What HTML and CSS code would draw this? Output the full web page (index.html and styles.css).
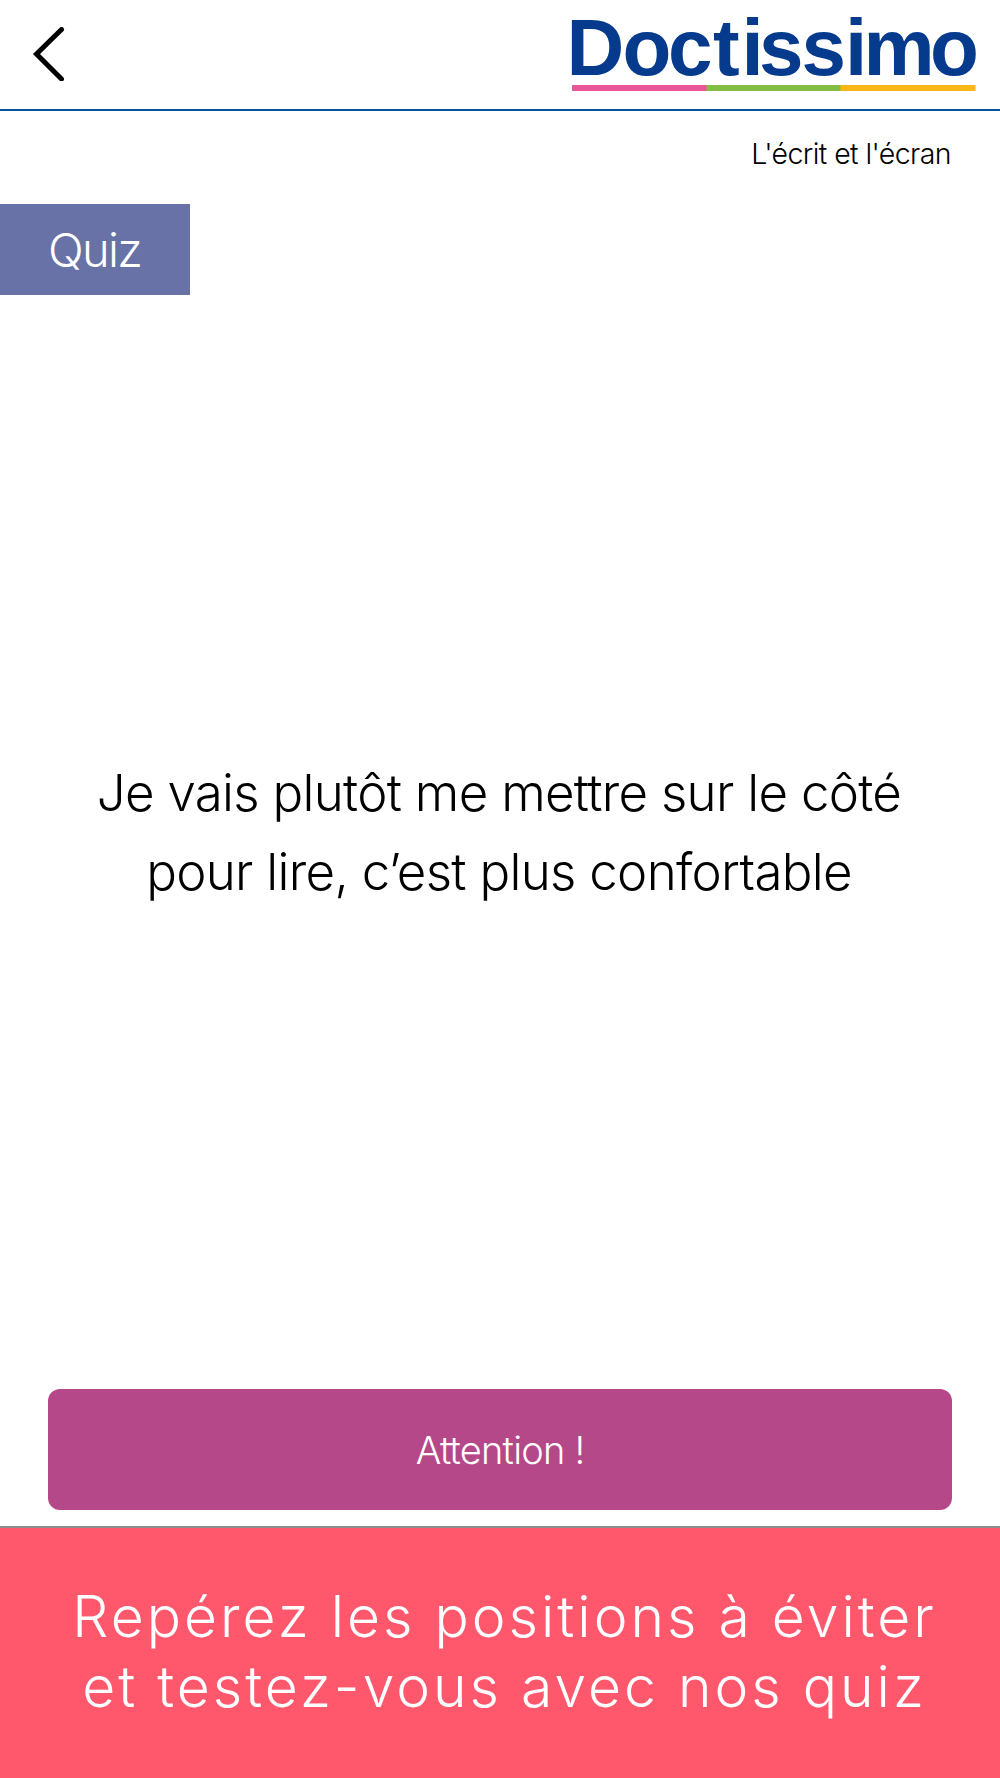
FILE: index.html
```html
<!DOCTYPE html>
<html lang="fr">
<head>
  <meta charset="UTF-8">
  <title>Doctissimo - Quiz</title>
  <link rel="stylesheet" href="styles.css">
</head>
<body>
  <header class="topbar">
    <a class="back" href="#" aria-label="Retour">
      <svg viewBox="0 0 34 54" width="34" height="54"><path d="M29.5 2.5 L4.5 27 L29.5 52" /></svg>
    </a>
    <div class="logo">
      <svg viewBox="0 0 404 76" width="404" height="76">
        <text x="-5.5 50.5 96 141 169.5 187 229.5 273 291.5 358" y="57">Doctissimo</text>
        <rect class="pink" x="0" y="67" width="135" height="6" />
        <rect class="green" x="134.5" y="67" width="134.5" height="6" />
        <rect class="yellow" x="268.5" y="67" width="135" height="6" />
      </svg>
    </div>
  </header>

  <main>
    <p class="subject">L'écrit et l'écran</p>
    <h1 class="tag">Quiz</h1>
    <div class="question">
      <p>Je vais plutôt me mettre sur le côté</p>
      <p>pour lire, c’est plus confortable</p>
    </div>
    <button class="answer">Attention !</button>
  </main>

  <footer class="banner">
    <p>Repérez les positions à éviter</p>
    <p>et testez-vous avec nos quiz</p>
  </footer>
</body>
</html>
```

FILE: styles.css
```css
* {
  box-sizing: border-box;
}

body {
  margin: 0;
  height: 1778px;
  display: flex;
  flex-direction: column;
  background: #fff;
  color: #000;
  font-family: Inter, "Liberation Sans", sans-serif;
  font-weight: 300;
}

p, h1 {
  margin: 0;
}

.topbar {
  display: flex;
  justify-content: space-between;
  height: 111px;
  padding: 18px 24px 0 32px;
  border-bottom: 2px solid #0850a0;
}

.back {
  margin-top: 9px;
}

.back path {
  fill: none;
  stroke: #000;
  stroke-width: 5;
  stroke-linecap: round;
}

.logo svg {
  overflow: visible;
}

.logo text {
  font-family: "Liberation Sans", sans-serif;
  font-weight: 700;
  font-size: 80px;
  fill: #053a8d;
}

.pink { fill: #ea5599; }
.green { fill: #84bd43; }
.yellow { fill: #fbb517; }

main {
  flex: 1;
  display: flex;
  flex-direction: column;
}

.subject {
  height: 93px;
  padding: 24px 49px 0;
  text-align: right;
  font-size: 28.5px;
  line-height: 38px;
  letter-spacing: -0.6px;
}

.tag {
  width: 190px;
  height: 91px;
  padding-right: 1px;
  background: #6872a6;
  color: #fff;
  font-size: 47px;
  font-weight: 300;
  line-height: 92px;
  letter-spacing: -1.7px;
  text-align: center;
}

.question {
  flex: 1;
  padding: 458px 2px 0 0;
  text-align: center;
  font-size: 51px;
  line-height: 79px;
  letter-spacing: -0.7px;
}

.answer {
  height: 121px;
  margin: 0 48px 16px;
  border: none;
  border-radius: 12px;
  background: #b54888;
  color: #fff;
  font: inherit;
  font-size: 38px;
  letter-spacing: -0.8px;
}

.banner {
  height: 252px;
  padding: 54px 0 0 9px;
  border-top: 2px solid #8c8c8c;
  background: #ff586d;
  color: #fff;
  text-align: center;
  font-size: 57px;
  line-height: 70px;
  letter-spacing: 3px;
}
```
